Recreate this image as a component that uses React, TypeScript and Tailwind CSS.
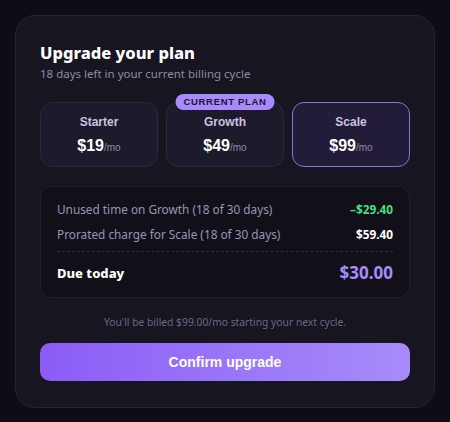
import React from 'react';

const PLANS = [
  { id: 'starter', name: 'Starter', price: 19 },
  { id: 'growth', name: 'Growth', price: 49, current: true },
  { id: 'scale', name: 'Scale', price: 99, selected: true },
];

export default function App() {
  return (
    <div className="min-h-[422px] w-[450px] bg-[#0e0c16] p-[15px] font-['Noto_Sans',sans-serif]">
      <div className="rounded-[20px] border border-[#26233a] bg-[#17151f] px-6 pt-[26px] pb-[26px]">
        <h2 className="text-[16.5px] font-extrabold leading-[22px] text-white">Upgrade your plan</h2>
        <p className="mt-[2px] text-[11.5px] leading-4 text-[#8f8aa6]">18 days left in your current billing cycle</p>

        {/* plans */}
        <div className="mt-[20px] grid grid-cols-3 gap-2">
          {PLANS.map(p => (
            <div
              key={p.id}
              className={
                p.selected
                  ? "relative flex h-[65px] flex-col items-center justify-center rounded-[12px] border border-[#8c72d6] bg-[#231c38]"
                  : "relative flex h-[65px] flex-col items-center justify-center rounded-[12px] border border-[#2a2640] bg-[#1c1a2b]"
              }
            >
              {p.current && (
                <span className="absolute -top-[9px] left-1/2 -translate-x-1/2 whitespace-nowrap rounded-full bg-[#a78bfa] px-[8px] py-[1px] font-['Liberation_Sans',sans-serif] text-[9.5px] font-bold leading-[14px] tracking-[0.07em] text-[#1c1433]">
                  CURRENT PLAN
                </span>
              )}
              <div className="mt-[2px] font-['Liberation_Sans',sans-serif] text-[12px] font-bold leading-4 text-[#c9c4e0]">{p.name}</div>
              <div className="mt-[6px] font-['Liberation_Sans',sans-serif] leading-5 text-white">
                <span className="text-[16px] font-bold">${p.price}</span>
                <span className="text-[10px] text-[#8f8aa6]">/mo</span>
              </div>
            </div>
          ))}
        </div>

        {/* breakdown */}
        <div className="mt-[19px] rounded-[12px] border border-[#221f33] bg-[#111019] px-4 pt-[13px] pb-[12px]">
          <div className="flex items-center justify-between text-[11.8px] leading-[18px]">
            <span className="text-[#9a95b3]">Unused time on Growth (18 of 30 days)</span>
            <span className="font-bold text-[#4ade80]">–$29.40</span>
          </div>
          <div className="mt-[7px] flex items-center justify-between text-[11.8px] leading-[18px]">
            <span className="text-[#9a95b3]">Prorated charge for Scale (18 of 30 days)</span>
            <span className="font-bold text-white">$59.40</span>
          </div>
          <div className="mt-[8px] border-t border-dashed border-[#2e2a42]" />
          <div className="mt-[9px] flex items-center justify-between">
            <span className="text-[13px] font-extrabold leading-5 text-white">Due today</span>
            <span className="text-[17px] font-bold leading-6 text-[#a78bfa]">$30.00</span>
          </div>
        </div>

        <p className="mt-[16px] text-center text-[10.3px] leading-4 text-[#6c6784]">You'll be billed $99.00/mo starting your next cycle.</p>

        <button className="mt-[13px] flex h-[38px] w-full items-center justify-center rounded-[10px] bg-gradient-to-r from-[#8b5cf6] to-[#a78bfa] font-['Liberation_Sans',sans-serif] text-[14px] font-bold text-white">
          Confirm upgrade
        </button>
      </div>
    </div>
  );
}
